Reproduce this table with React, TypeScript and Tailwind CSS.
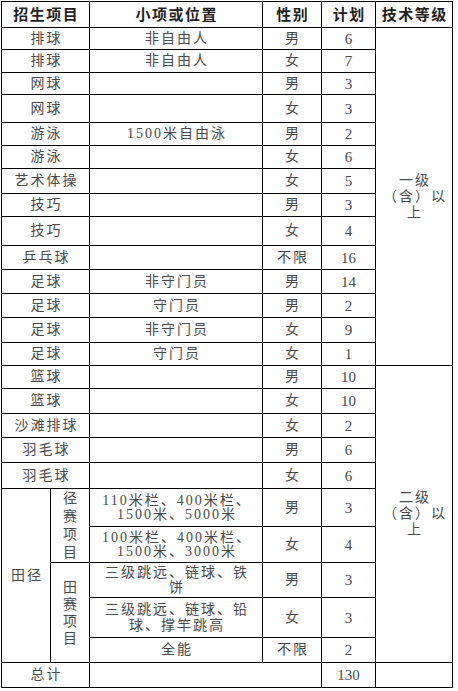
import React from "react"

type Row = { item: string; sub?: React.ReactNode; sex: string; plan: string; h: number }

const topRows: Row[] = [
    { item: "排球", sub: "非自由人", sex: "男", plan: "6", h: 22 },
    { item: "排球", sub: "非自由人", sex: "女", plan: "7", h: 23 },
    { item: "网球", sex: "男", plan: "3", h: 22 },
    { item: "网球", sex: "女", plan: "3", h: 28 },
    { item: "游泳", sub: "1500米自由泳", sex: "男", plan: "2", h: 23 },
    { item: "游泳", sex: "女", plan: "6", h: 23 },
    { item: "艺术体操", sex: "女", plan: "5", h: 25 },
    { item: "技巧", sex: "男", plan: "3", h: 23 },
    { item: "技巧", sex: "女", plan: "4", h: 29 },
    { item: "乒乓球", sex: "不限", plan: "16", h: 24 },
    { item: "足球", sub: "非守门员", sex: "男", plan: "14", h: 24 },
    { item: "足球", sub: "守门员", sex: "男", plan: "2", h: 24 },
    { item: "足球", sub: "非守门员", sex: "女", plan: "9", h: 25 },
    { item: "足球", sub: "守门员", sex: "女", plan: "1", h: 23 },
]

const midRows: Row[] = [
    { item: "篮球", sex: "男", plan: "10", h: 23 },
    { item: "篮球", sex: "女", plan: "10", h: 25 },
    { item: "沙滩排球", sex: "女", plan: "2", h: 24 },
    { item: "羽毛球", sex: "男", plan: "6", h: 25 },
    { item: "羽毛球", sex: "女", plan: "6", h: 26 },
]

const td = "border border-black p-0 text-center align-middle whitespace-nowrap"
const txt = "tracking-[2px] pl-[2px] text-[14px] text-[#4a4a4a]"
const num = "text-[15px] text-[#4a4a4a] leading-[16px]"
const one = "leading-[16px]"
const th = "border border-black p-0 text-center align-middle whitespace-nowrap text-[15px] leading-[16px] font-bold tracking-[1.5px] pl-[1.5px] text-[#1f1f1f]"

function Grade({ level }: { level: string }) {
    return (
        <span className="inline-block">
            {level}级<br />（含）以<br />上
        </span>
    )
}

function BodyRow({ r, grade }: { r: Row; grade?: React.ReactNode }) {
    return (
        <tr style={{ height: r.h }}>
            <td colSpan={2} className={`${td} ${txt} ${one}`}>{r.item}</td>
            <td className={`${td} ${txt} ${one}`}>{r.sub}</td>
            <td className={`${td} ${txt} ${one}`}>{r.sex}</td>
            <td className={`${td} ${num}`}>{r.plan}</td>
            {grade}
        </tr>
    )
}

export default function App() {
    return (
        <div className="bg-white w-[458px] h-[691px] pt-px pl-px font-['Liberation_Serif','Noto_Sans_CJK_SC',serif]">
            <table className="border-collapse table-fixed w-[451px]">
                <colgroup>
                    <col className="w-[49px]" />
                    <col className="w-[39px]" />
                    <col className="w-[173px]" />
                    <col className="w-[59px]" />
                    <col className="w-[54px]" />
                    <col className="w-[77px]" />
                </colgroup>
                <tbody>
                    <tr className="h-[26px]">
                        <td colSpan={2} className={th}>招生项目</td>
                        <td className={th}>小项或位置</td>
                        <td className={th}>性别</td>
                        <td className={th}>计划</td>
                        <td className={th}>技术等级</td>
                    </tr>
                    {topRows.map((r, i) => (
                        <BodyRow
                            key={"t" + i}
                            r={r}
                            grade={i === 0 ? (
                                <td rowSpan={14} className={`${td} ${txt} ${one}`}><Grade level="一" /></td>
                            ) : undefined}
                        />
                    ))}
                    {midRows.map((r, i) => (
                        <BodyRow
                            key={"m" + i}
                            r={r}
                            grade={i === 0 ? (
                                <td rowSpan={10} className={`${td} ${txt} ${one}`}><Grade level="二" /></td>
                            ) : undefined}
                        />
                    ))}
                    <tr className="h-[38px]">
                        <td rowSpan={5} className={`${td} ${txt} ${one}`}>田径</td>
                        <td rowSpan={2} className={`${td} ${txt} leading-[18px]`}>径<br />赛<br />项<br />目</td>
                        <td className={`${td} ${txt} leading-[14px]`}>110米栏、400米栏、<br />1500米、5000米</td>
                        <td className={`${td} ${txt} ${one}`}>男</td>
                        <td className={`${td} ${num}`}>3</td>
                    </tr>
                    <tr className="h-[36px]">
                        <td className={`${td} ${txt} leading-[14px]`}>100米栏、400米栏、<br />1500米、3000米</td>
                        <td className={`${td} ${txt} ${one}`}>女</td>
                        <td className={`${td} ${num}`}>4</td>
                    </tr>
                    <tr className="h-[35px]">
                        <td rowSpan={3} className={`${td} ${txt} leading-[17px]`}>田<br />赛<br />项<br />目</td>
                        <td className={`${td} ${txt} leading-[15px]`}>三级跳远、链球、铁<br />饼</td>
                        <td className={`${td} ${txt} ${one}`}>男</td>
                        <td className={`${td} ${num}`}>3</td>
                    </tr>
                    <tr className="h-[40px]">
                        <td className={`${td} ${txt} leading-[16px]`}>三级跳远、链球、铅<br />球、撑竿跳高</td>
                        <td className={`${td} ${txt} ${one}`}>女</td>
                        <td className={`${td} ${num}`}>3</td>
                    </tr>
                    <tr className="h-[25px]">
                        <td className={`${td} ${txt} ${one}`}>全能</td>
                        <td className={`${td} ${txt} ${one}`}>不限</td>
                        <td className={`${td} ${num}`}>2</td>
                    </tr>
                    <tr className="h-[25px]">
                        <td colSpan={2} className={`${td} ${txt} ${one}`}>总计</td>
                        <td colSpan={2} className={td}></td>
                        <td className={`${td} ${num}`}>130</td>
                        <td className={td}></td>
                    </tr>
                </tbody>
            </table>
        </div>
    )
}
